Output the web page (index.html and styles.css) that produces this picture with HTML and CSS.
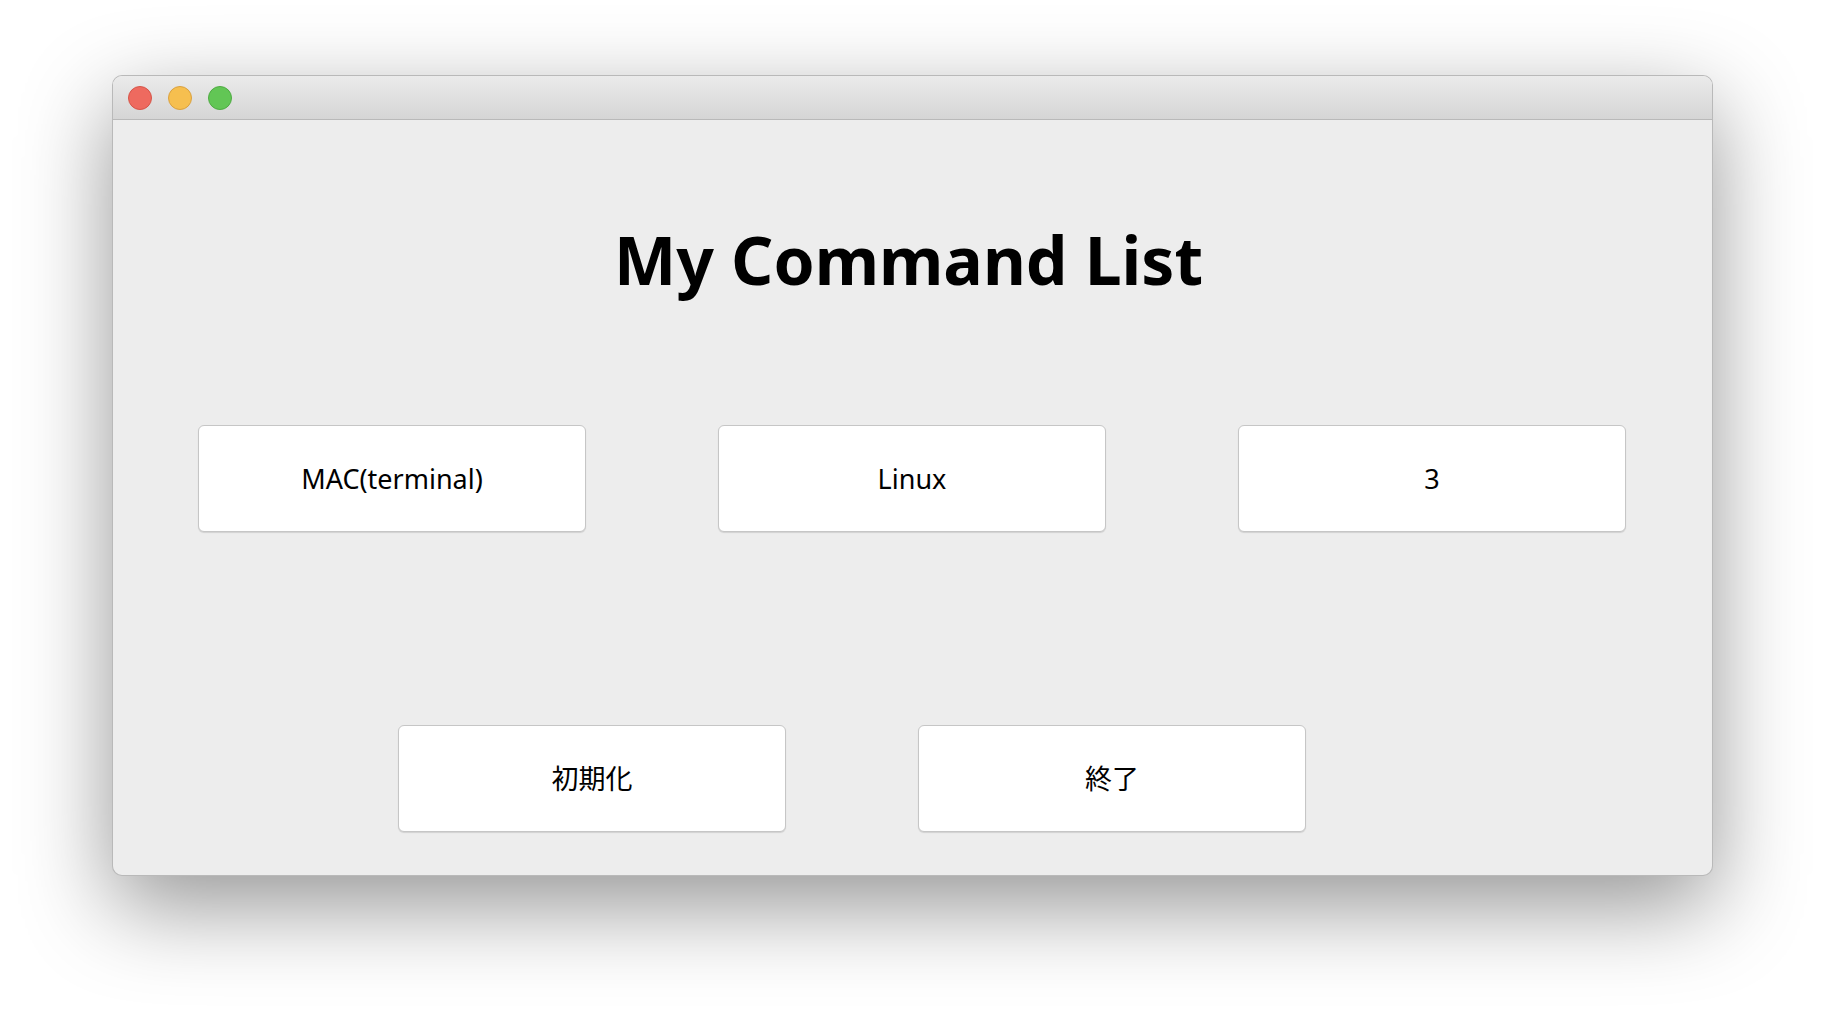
FILE: index.html
```html
<!DOCTYPE html>
<html lang="ja">
<head>
<meta charset="utf-8">
<title>My Command List</title>
<link rel="stylesheet" href="styles.css">
</head>
<body>
<div class="desktop">
  <div class="window">
    <div class="titlebar">
      <span class="light red"></span>
      <span class="light yellow"></span>
      <span class="light green"></span>
    </div>
    <div class="content">
      <h1 class="title">My Command List</h1>
      <div class="row row-top">
        <div class="btn">MAC(terminal)</div>
        <div class="btn">Linux</div>
        <div class="btn">3</div>
      </div>
      <div class="row row-bottom">
        <div class="btn cjk">初期化</div>
        <div class="btn cjk">終了</div>
      </div>
    </div>
  </div>
</div>
</body>
</html>
```

FILE: styles.css
```css
html, body {
  margin: 0;
  padding: 0;
  background: #ffffff;
}

.desktop {
  width: 1824px;
  height: 1024px;
  padding: 75px 0 0 112px;
  box-sizing: border-box;
}

.window {
  width: 1601px;
  height: 801px;
  box-sizing: border-box;
  border: 1px solid rgba(0, 0, 0, 0.22);
  border-radius: 10px;
  background: #ededed;
  box-shadow: 0 30px 90px rgba(0, 0, 0, 0.42);
  overflow: hidden;
  display: flex;
  flex-direction: column;
}

.titlebar {
  height: 43px;
  flex: none;
  border-bottom: 1px solid #b9b9b9;
  background: linear-gradient(to bottom, #ebebeb, #d5d5d5);
  display: flex;
  align-items: center;
  gap: 16px;
  padding-left: 15px;
}

.light {
  width: 24px;
  height: 24px;
  border-radius: 50%;
  box-sizing: border-box;
  display: block;
}
.red { background: #ee6a5f; border: 1px solid #d65549; }
.yellow { background: #f6bf4f; border: 1px solid #daa140; }
.green { background: #62c655; border: 1px solid #4fab43; }

.content {
  flex: 1;
  padding: 0 85px;
}

.title {
  margin: 99px 0 0 0;
  padding-right: 8px;
  text-align: center;
  font-family: "Noto Sans", "DejaVu Sans", sans-serif;
  font-weight: 700;
  font-size: 66px;
  line-height: 80px;
  color: #000;
}

.row {
  display: flex;
  gap: 132px;
}
.row-top { margin-top: 126px; }
.row-bottom { margin-top: 193px; margin-left: 200px; }

.btn {
  width: 388px;
  height: 107px;
  box-sizing: border-box;
  background: #ffffff;
  border: 1px solid #c6c6c6;
  border-radius: 6px;
  box-shadow: 0 1px 1px rgba(0, 0, 0, 0.12);
  display: flex;
  align-items: center;
  justify-content: center;
  font-family: "Noto Sans", "Noto Sans CJK JP", sans-serif;
  font-size: 27px;
  color: #000;
}

.btn.cjk {
  padding-bottom: 3px;
}
```
